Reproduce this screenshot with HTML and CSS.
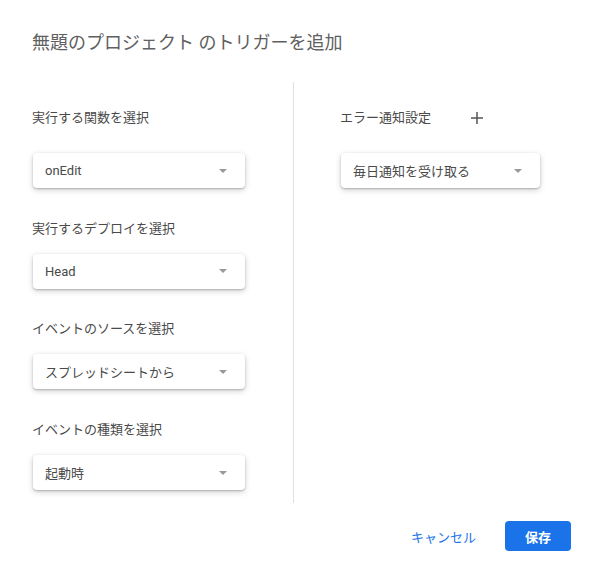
FILE: index.html
```html
<!DOCTYPE html>
<html lang="ja">
<head>
<meta charset="utf-8">
<link rel="stylesheet" href="styles.css">
</head>
<body>
<div class="dialog">
  <h1 class="title">無題のプロジェクト のトリガーを追加</h1>
  <div class="columns">
    <div class="col-left">
      <div class="field field-first">
        <div class="label">実行する関数を選択</div>
        <div class="select"><span>onEdit</span><i class="arrow"></i></div>
      </div>
      <div class="field">
        <div class="label">実行するデプロイを選択</div>
        <div class="select"><span>Head</span><i class="arrow"></i></div>
      </div>
      <div class="field">
        <div class="label">イベントのソースを選択</div>
        <div class="select"><span>スプレッドシートから</span><i class="arrow"></i></div>
      </div>
      <div class="field">
        <div class="label">イベントの種類を選択</div>
        <div class="select"><span>起動時</span><i class="arrow"></i></div>
      </div>
    </div>
    <div class="divider"></div>
    <div class="col-right">
      <div class="field field-first">
        <div class="label label-row">エラー通知設定
          <svg class="plus" width="12" height="12" viewBox="0 0 12 12"><path d="M6 0v12M0 6h12" stroke="#555" stroke-width="1.5" fill="none"/></svg>
        </div>
        <div class="select select-wide"><span>毎日通知を受け取る</span><i class="arrow"></i></div>
      </div>
    </div>
  </div>
  <div class="actions">
    <button class="btn-text">キャンセル</button>
    <button class="btn-primary">保存</button>
  </div>
</div>
</body>
</html>
```

FILE: styles.css
```css
html, body {
  margin: 0;
  padding: 0;
  background: #fff;
}
body {
  font-family: Roboto, "Noto Sans CJK JP", sans-serif;
  color: #444;
}
.dialog {
  width: 603px;
  height: 563px;
  box-sizing: border-box;
  padding: 30px 0 0 32px;
}
.title {
  margin: 0;
  font-size: 18px;
  line-height: 26px;
  font-weight: 400;
  color: #606060;
}
.columns {
  display: flex;
  margin-top: 26px;
  height: 421px;
}
.col-left {
  width: 214px;
  padding: 26px 0 0 1px;
  display: flex;
  flex-direction: column;
  gap: 30.7px;
}
.divider {
  width: 1px;
  background: #e0e0e0;
  margin-left: 46px;
}
.col-right {
  padding: 26px 0 0 47px;
}
.field {
  display: flex;
  flex-direction: column;
  gap: 15px;
}
.field-first {
  gap: 25px;
}
.label {
  font-size: 13px;
  line-height: 20px;
  color: #4a4a4a;
  margin-left: -1px;
}
.label-row {
  display: flex;
  align-items: center;
}
.plus {
  margin-left: 40px;
}
.select {
  height: 35px;
  width: 212px;
  box-sizing: border-box;
  border-radius: 4px;
  background: #fff;
  box-shadow: 0 1px 2px rgba(0,0,0,0.22), 0 2px 6px rgba(0,0,0,0.18);
  display: flex;
  align-items: center;
  justify-content: space-between;
  padding: 0 18px 0 12px;
  font-size: 13px;
  color: #4a4a4a;
}
.select-wide {
  width: 199px;
}
.arrow {
  width: 0;
  height: 0;
  border-left: 4.5px solid transparent;
  border-right: 4.5px solid transparent;
  border-top: 4px solid #999;
}
.actions {
  display: flex;
  justify-content: flex-end;
  align-items: center;
  gap: 23px;
  margin-top: 18px;
  padding-right: 32px;
}
.btn-text {
  border: none;
  background: none;
  font-family: inherit;
  font-size: 13px;
  color: #1a73e8;
  padding: 0 6px;
  height: 30px;
  cursor: pointer;
}
.btn-primary {
  border: none;
  background: #1a73e8;
  color: #fff;
  font-family: inherit;
  font-size: 13px;
  font-weight: 700;
  width: 66px;
  height: 30px;
  border-radius: 4px;
  cursor: pointer;
}
```
